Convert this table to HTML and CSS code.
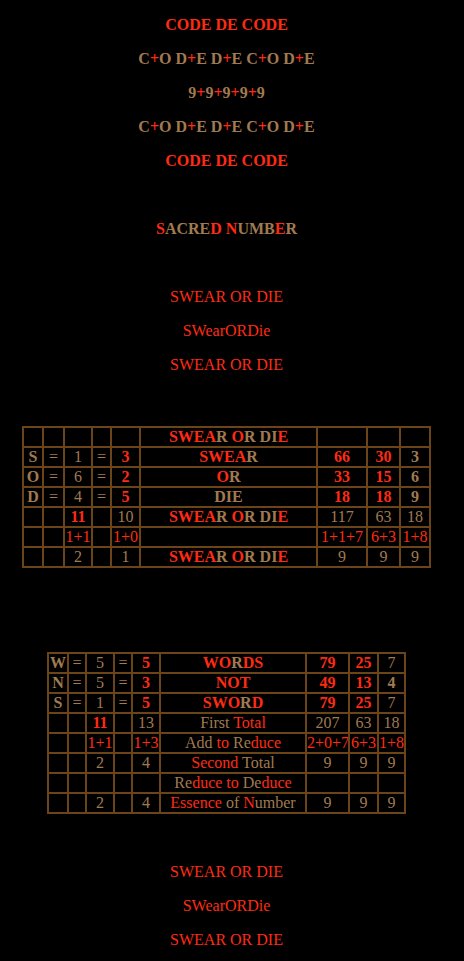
FILE: index.html
```html
<!DOCTYPE html>
<html lang="en">
<head>
    <meta charset="UTF-8">
    <meta name="viewport" content="width=device-width, initial-scale=1.0">
    <title>Code de Code</title>
    <link rel="stylesheet" href="styles.css">
</head>
<body>
    <p class="bold r">CODE DE CODE</p>
    <p class="bold">C<span class="r">+</span>O D<span class="r">+</span>E D<span class="r">+</span>E C<span class="r">+</span>O D<span class="r">+</span>E</p>
    <p class="bold">9<span class="r">+</span>9<span class="r">+</span>9<span class="r">+</span>9<span class="r">+</span>9</p>
    <p class="bold">C<span class="r">+</span>O D<span class="r">+</span>E D<span class="r">+</span>E C<span class="r">+</span>O D<span class="r">+</span>E</p>
    <p class="bold r">CODE DE CODE</p>
    <p>&nbsp;</p>
    <p class="bold"><span class="r">S</span>ACRE<span class="r">D N</span>UMB<span class="r">E</span>R</p>
    <p>&nbsp;</p>
    <p class="r">SWEAR OR DIE</p>
    <p class="r">SWearORDie</p>
    <p class="r">SWEAR OR DIE</p>

    <!-- first table -->
    <table class="grid grid-one">
        <colgroup>
            <col class="c20"><col class="c21"><col class="c28"><col class="c19"><col class="c29">
            <col class="c177"><col class="c50"><col class="c33"><col class="c30">
        </colgroup>
        <tr>
            <td></td><td></td><td></td><td></td><td></td>
            <td class="bold"><span class="r">SWEA</span>R <span class="r">O</span>R DI<span class="r">E</span></td>
            <td></td><td></td><td></td>
        </tr>
        <tr>
            <td class="bold">S</td><td>=</td><td>1</td><td>=</td><td class="bold r">3</td>
            <td class="bold"><span class="r">SWEA</span>R</td>
            <td class="bold r">66</td><td class="bold r">30</td><td class="bold">3</td>
        </tr>
        <tr>
            <td class="bold">O</td><td>=</td><td>6</td><td>=</td><td class="bold r">2</td>
            <td class="bold"><span class="r">O</span>R</td>
            <td class="bold r">33</td><td class="bold r">15</td><td class="bold">6</td>
        </tr>
        <tr>
            <td class="bold">D</td><td>=</td><td>4</td><td>=</td><td class="bold r">5</td>
            <td class="bold">DIE</td>
            <td class="bold r">18</td><td class="bold r">18</td><td class="bold">9</td>
        </tr>
        <tr>
            <td></td><td></td><td class="bold r">11</td><td></td><td>10</td>
            <td class="bold"><span class="r">SWEA</span>R <span class="r">O</span>R DI<span class="r">E</span></td>
            <td>117</td><td>63</td><td>18</td>
        </tr>
        <tr>
            <td></td><td></td><td class="r">1+1</td><td></td><td class="r">1+0</td>
            <td></td>
            <td class="r">1+1+7</td><td class="r">6+3</td><td class="r">1+8</td>
        </tr>
        <tr>
            <td></td><td></td><td>2</td><td></td><td>1</td>
            <td class="bold"><span class="r">SWEA</span>R <span class="r">O</span>R DI<span class="r">E</span></td>
            <td>9</td><td>9</td><td>9</td>
        </tr>
    </table>

    <!-- second table -->
    <table class="grid grid-two">
        <colgroup>
            <col class="c20"><col class="c18"><col class="c28"><col class="c18"><col class="c28">
            <col class="c146"><col class="c43"><col class="c29"><col class="c27">
        </colgroup>
        <tr>
            <td class="bold">W</td><td>=</td><td>5</td><td>=</td><td class="bold r">5</td>
            <td class="bold"><span class="r">WO</span>R<span class="r">DS</span></td>
            <td class="bold r">79</td><td class="bold r">25</td><td>7</td>
        </tr>
        <tr>
            <td class="bold">N</td><td>=</td><td>5</td><td>=</td><td class="bold r">3</td>
            <td class="bold r">NOT</td>
            <td class="bold r">49</td><td class="bold r">13</td><td class="bold">4</td>
        </tr>
        <tr>
            <td class="bold">S</td><td>=</td><td>1</td><td>=</td><td class="bold r">5</td>
            <td class="bold"><span class="r">SWO</span>R<span class="r">D</span></td>
            <td class="bold r">79</td><td class="bold r">25</td><td>7</td>
        </tr>
        <tr>
            <td></td><td></td><td class="bold r">11</td><td></td><td>13</td>
            <td>First <span class="r">Total</span></td>
            <td>207</td><td>63</td><td>18</td>
        </tr>
        <tr>
            <td></td><td></td><td class="r">1+1</td><td></td><td class="r">1+3</td>
            <td>Add <span class="r">to</span> Re<span class="r">duce</span></td>
            <td class="r">2+0+7</td><td class="r">6+3</td><td class="r">1+8</td>
        </tr>
        <tr>
            <td></td><td></td><td>2</td><td></td><td>4</td>
            <td><span class="r">Second</span> Total</td>
            <td>9</td><td>9</td><td>9</td>
        </tr>
        <tr>
            <td></td><td></td><td></td><td></td><td></td>
            <td>Re<span class="r">duce to</span> De<span class="r">duce</span></td>
            <td></td><td></td><td></td>
        </tr>
        <tr>
            <td></td><td></td><td>2</td><td></td><td>4</td>
            <td><span class="r">Essence</span> of <span class="r">N</span>umber</td>
            <td>9</td><td>9</td><td>9</td>
        </tr>
    </table>

    <p class="r after">SWEAR OR DIE</p>
    <p class="r">SWearORDie</p>
    <p class="r">SWEAR OR DIE</p>
</body>
</html>
```

FILE: styles.css
```css
body {
    margin: 0 19px 8px 8px;
    background-color: #000000;
    color: #a07a50;
    font-family: "Liberation Serif", "Times New Roman", serif;
    font-size: 16px;
    line-height: 18px;
    text-align: center;
}
p {
    margin: 16px 0;
}
.bold {
    font-weight: bold;
}
.r {
    color: #ff2a12;
}
.grid {
    border: 1px solid #6b4418;
    border-collapse: separate;
    border-spacing: 0;
    table-layout: fixed;
    margin-left: auto;
    margin-right: auto;
}
.grid td {
    border: 1px solid #6b4418;
    padding: 0;
    height: 18px;
    line-height: 18px;
    text-align: center;
    white-space: nowrap;
    overflow: hidden;
}
.grid-one {
    width: 409px;
    margin-top: 52px;
}
.grid-two {
    width: 359px;
    margin-top: 84px;
}
.after {
    margin-top: 49px;
}
.c18 { width: 18px; }
.c19 { width: 19px; }
.c20 { width: 20px; }
.c21 { width: 21px; }
.c27 { width: 27px; }
.c28 { width: 28px; }
.c29 { width: 29px; }
.c30 { width: 30px; }
.c33 { width: 33px; }
.c43 { width: 43px; }
.c50 { width: 50px; }
.c146 { width: 146px; }
.c177 { width: 177px; }
```
